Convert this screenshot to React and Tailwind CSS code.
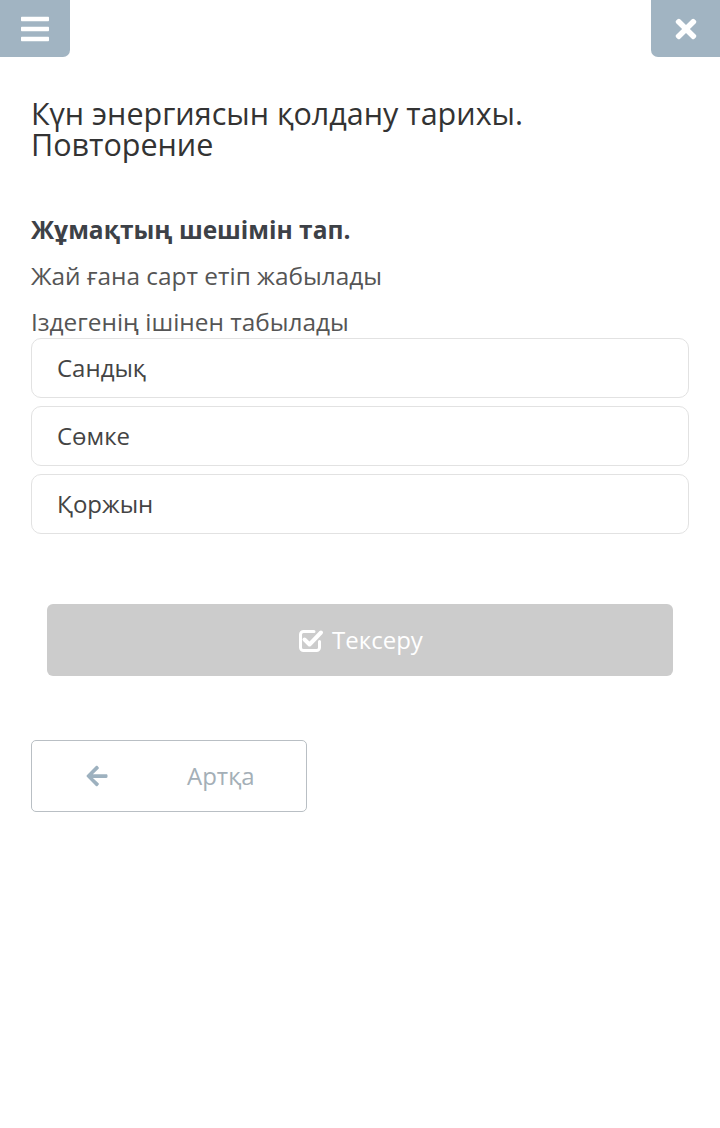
import React from "react";
import { FaBars, FaTimes, FaArrowLeft } from "react-icons/fa";

function CheckSquare() {
  return (
    <svg width="27" height="25" viewBox="0 0 27 25" fill="none">
      <path
        d="M17 3.5H6.5a3 3 0 0 0-3 3v13a3 3 0 0 0 3 3h13a3 3 0 0 0 3-3v-6"
        stroke="white"
        strokeWidth="3"
        strokeLinecap="round"
      />
      <path d="M7.5 11.5l5 5 11.5-12" stroke="white" strokeWidth="4" strokeLinecap="round" strokeLinejoin="round" />
    </svg>
  );
}

export default function App() {
  const options = ["Сандық", "Сөмке", "Қоржын"];
  return (
    <div className="min-h-[1128px] bg-white font-['Open_Sans',sans-serif]">
      <div className="flex h-[57px] justify-between">
        <button className="flex h-[57px] w-[70px] items-center justify-center rounded-br-[7px] bg-[#a1b4c2] text-white">
          <FaBars size={32} />
        </button>
        <button className="flex h-[57px] w-[69px] items-center justify-center rounded-bl-[7px] bg-[#a1b4c2] text-white">
          <FaTimes size={30} />
        </button>
      </div>
      <div className="px-[31px]">
        <h1 className="mt-[41px] text-[30.5px] leading-[31px] font-normal text-[#333]">
          Күн энергиясын қолдану тарихы.
          <br />
          Повторение
        </h1>
        <div className="mt-[55px] flex flex-col gap-[16px]">
          <p className="text-[24.5px] leading-[30px] font-bold text-[#3d4147]">Жұмақтың шешімін тап.</p>
          <p className="text-[24.4px] leading-[30px] text-[#555]">Жай ғана сарт етіп жабылады</p>
          <p className="text-[24.4px] leading-[30px] text-[#555]">Іздегенің ішінен табылады</p>
        </div>
        <div className="mt-[1px] flex flex-col gap-[8px]">
          {options.map((o) => (
            <div
              key={o}
              className="flex h-[60px] items-center rounded-[10px] border border-[#e2e2e2] bg-white pl-[25px] text-[24px] text-[#444]"
            >
              {o}
            </div>
          ))}
        </div>
        <div className="mx-[16px] mt-[70px] flex h-[72px] items-center justify-center gap-[8px] rounded-[6px] bg-[#cccccc] text-[24px] text-white">
          <CheckSquare />
          <span>Тексеру</span>
        </div>
        <div className="mt-[64px] flex h-[72px] w-[276px] items-center rounded-[5px] border border-[#b9bfc4] pl-[53px] text-[24px] text-[#a4afb7]">
          <FaArrowLeft size={24} className="text-[#9db1bf]" />
          <span className="ml-[78px]">Артқа</span>
        </div>
      </div>
    </div>
  );
}
